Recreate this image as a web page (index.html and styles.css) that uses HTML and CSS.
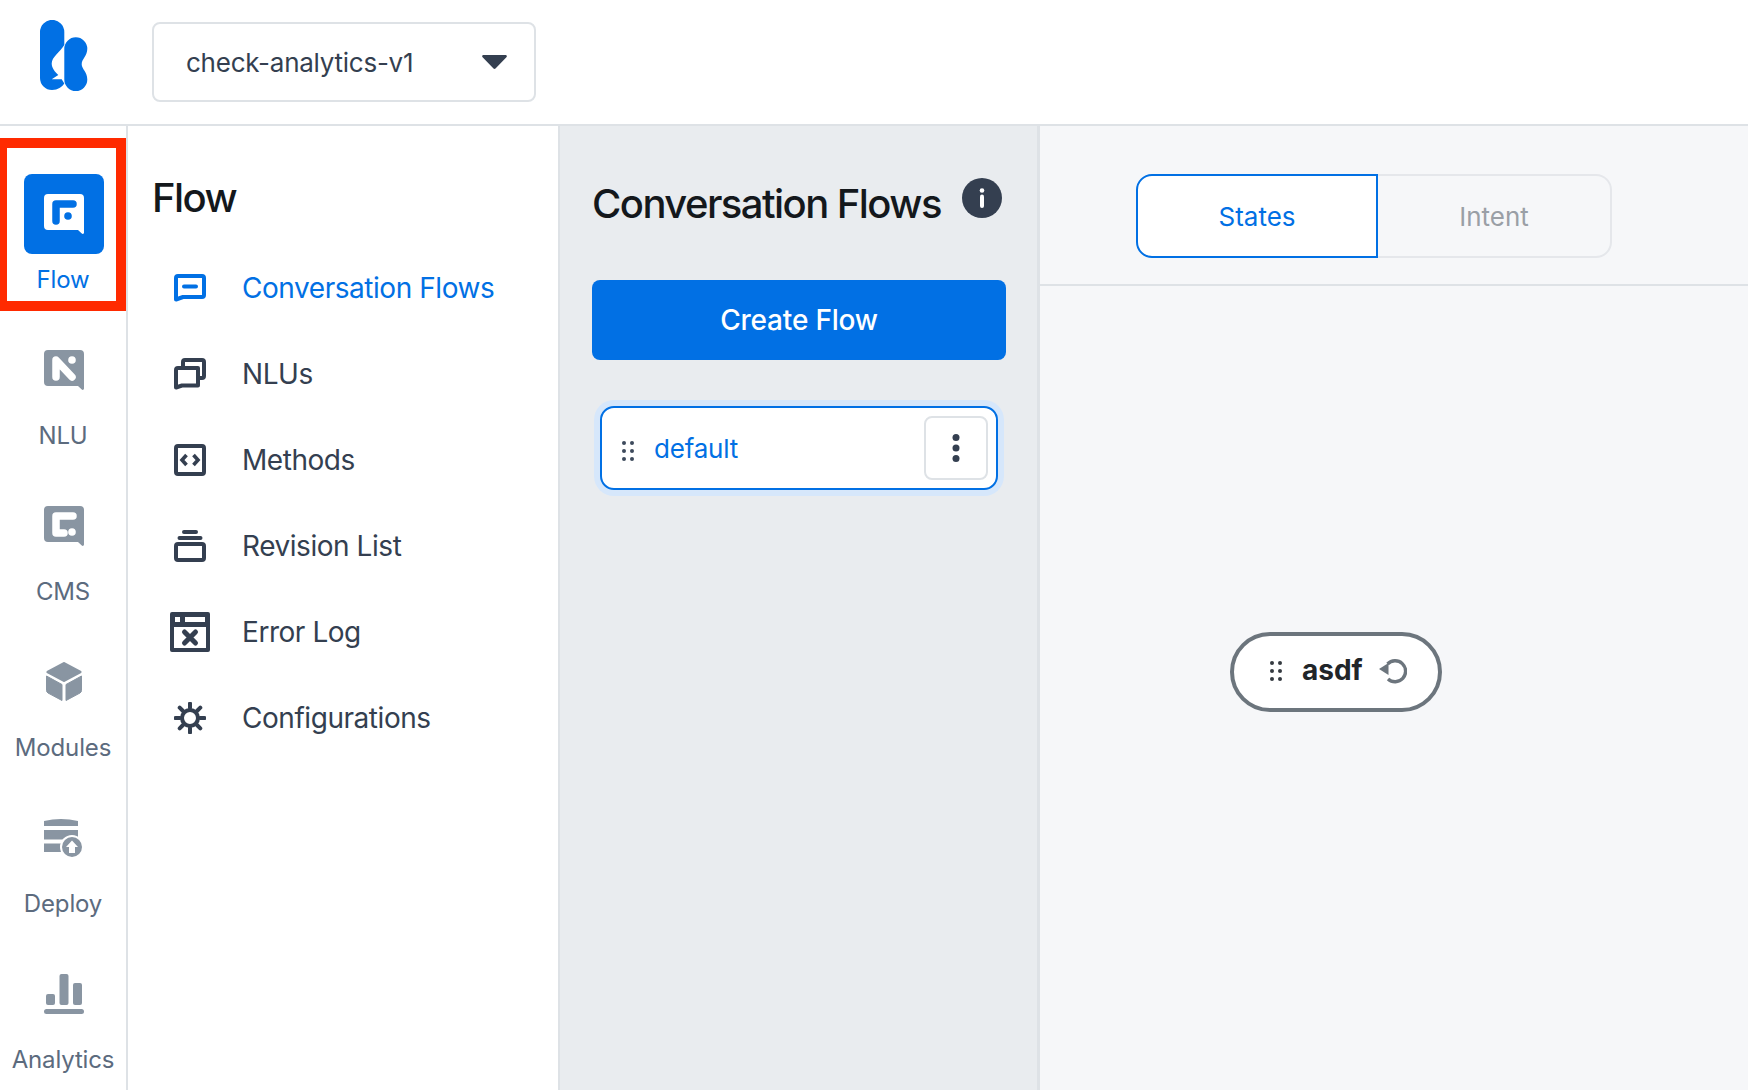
FILE: index.html
```html
<!DOCTYPE html>
<html lang="en">
<head>
  <meta charset="UTF-8" />
  <title>check-analytics-v1 - Flow</title>
  <link rel="stylesheet" href="styles.css">
</head>
<body>

  <header class="topbar">
    <div class="logo">
      <svg width="48" height="71" viewBox="0 0 48 71">
        <path d="M0 12A12 12 0 0 1 24.300 12V25C20 32 11.700 37 11.700 43.500C11.700 48 15 52 18.300 55L11.700 59.300H21.700L24.300 63.500C22 67 18 70 12 70A12 12 0 0 1 0 58Z" fill="#0170e4"/>
        <path d="M24.300 28.800A11.500 11.500 0 0 1 47.300 28.800C47.300 36 41.700 39 41.700 44.300C41.700 49 47.300 52 47.300 59.500A11.500 11.500 0 0 1 24.300 59.500Z" fill="#0170e4"/>
      </svg>
    </div>
    <div class="project-select">
      <span>check-analytics-v1</span>
      <svg width="25" height="14" viewBox="0 0 25 14"><path d="M1.500 0H23.500C24.800 0 25.300 1.400 24.400 2.300L13.500 13.500C12.900 14.100 12.100 14.100 11.500 13.500L0.600 2.300C-0.300 1.400 0.200 0 1.500 0Z" fill="#343f50"/></svg>
    </div>
  </header>

  <div class="main">
    <nav class="rail">
      <a class="rail-item active">
        <span class="tile">
          <svg width="40" height="40" viewBox="0 0 40 40">
            <path class="bubble" d="M4 0H36a4 4 0 0 1 4 4V38.500a1.300 1.300 0 0 1-2.200 1L34 36H4a4 4 0 0 1-4-4V4a4 4 0 0 1 4-4Z" fill="#fff"/>
            <path d="M12 27V10H29" fill="none" stroke="#0170e4" stroke-width="7.500" stroke-linecap="round" stroke-linejoin="round"/>
            <circle cx="24" cy="22" r="3.800" fill="#0170e4"/>
          </svg>
        </span>
        <span class="rail-label">Flow</span>
      </a>
      <a class="rail-item">
        <span class="tile">
          <svg width="42" height="40" viewBox="0 0 40 40">
            <path d="M4 0H36a4 4 0 0 1 4 4V38.500a1.300 1.300 0 0 1-2.200 1L34 36H4a4 4 0 0 1-4-4V4a4 4 0 0 1 4-4Z" fill="#8995a2"/>
            <path d="M12 27V10L28 27" fill="none" stroke="#fff" stroke-width="7.500" stroke-linecap="round" stroke-linejoin="round"/>
            <circle cx="28" cy="10" r="3.800" fill="#fff"/>
          </svg>
        </span>
        <span class="rail-label">NLU</span>
      </a>
      <a class="rail-item">
        <span class="tile">
          <svg width="42" height="40" viewBox="0 0 40 40">
            <path d="M4 0H36a4 4 0 0 1 4 4V38.500a1.300 1.300 0 0 1-2.200 1L34 36H4a4 4 0 0 1-4-4V4a4 4 0 0 1 4-4Z" fill="#8995a2"/>
            <path d="M29 10H12V27H20" fill="none" stroke="#fff" stroke-width="7.500" stroke-linecap="round" stroke-linejoin="round"/>
            <circle cx="28" cy="26" r="3.800" fill="#fff"/>
          </svg>
        </span>
        <span class="rail-label">CMS</span>
      </a>
      <a class="rail-item">
        <span class="tile">
          <svg width="38" height="40" viewBox="0 0 38 40">
            <path d="M19 1.500L35 10L19 18.500L3 10Z" fill="#8995a2" stroke="#8995a2" stroke-width="3" stroke-linejoin="round"/>
            <path d="M1.500 14L17 22.500V38.500L3 31Q1.500 30 1.500 28.500Z" fill="#8995a2" stroke="#8995a2" stroke-width="1" stroke-linejoin="round"/>
            <path d="M36.500 14L21 22.500V38.500L35 31Q36.500 30 36.500 28.500Z" fill="#8995a2" stroke="#8995a2" stroke-width="1" stroke-linejoin="round"/>
          </svg>
        </span>
        <span class="rail-label">Modules</span>
      </a>
      <a class="rail-item">
        <span class="tile">
          <svg width="40" height="40" viewBox="0 0 40 40">
            <path d="M0 3Q17 -1 34 3V8H0Z" fill="#8995a2"/>
            <rect y="12" width="34" height="9.500" fill="#8995a2"/>
            <path d="M0 25.500H34V34H0Z" fill="#8995a2"/>
            <circle cx="28" cy="29" r="12" fill="#fff"/>
            <circle cx="28" cy="29" r="10" fill="#8995a2"/>
            <path d="M28 22.500L34 29H31V35H25V29H22Z" fill="#fff"/>
          </svg>
        </span>
        <span class="rail-label">Deploy</span>
      </a>
      <a class="rail-item">
        <span class="tile">
          <svg width="40" height="40" viewBox="0 0 40 40">
            <rect x="2" y="20" width="9" height="11" rx="2" fill="#8995a2"/>
            <rect x="15.500" y="0" width="9" height="31" rx="2" fill="#8995a2"/>
            <rect x="29" y="9" width="9" height="22" rx="2" fill="#8995a2"/>
            <rect x="0" y="35" width="40" height="5" rx="2.500" fill="#8995a2"/>
          </svg>
        </span>
        <span class="rail-label">Analytics</span>
      </a>
    </nav>

    <aside class="menu">
      <h2>Flow</h2>
      <a class="menu-item current">
        <span class="menu-icon">
          <svg width="32" height="28" viewBox="0 0 32 28">
            <path d="M2 4V25.500L9 23H28A2 2 0 0 0 30 21V4A2 2 0 0 0 28 2H4A2 2 0 0 0 2 4Z" fill="none" stroke="currentColor" stroke-width="4" stroke-linejoin="round"/>
            <path d="M10 12.500H22" stroke="currentColor" stroke-width="4" stroke-linecap="round"/>
          </svg>
        </span>
        Conversation Flows
      </a>
      <a class="menu-item">
        <span class="menu-icon">
          <svg width="32" height="32" viewBox="0 0 32 32">
            <path d="M2 12V29.500L8 27.500H24V10H4A2 2 0 0 0 2 12Z" fill="none" stroke="currentColor" stroke-width="4" stroke-linejoin="round"/>
            <path d="M9 9V4A2 2 0 0 1 11 2H28A2 2 0 0 1 30 4V18A2 2 0 0 1 28 20H24" fill="none" stroke="currentColor" stroke-width="4"/>
          </svg>
        </span>
        NLUs
      </a>
      <a class="menu-item">
        <span class="menu-icon">
          <svg width="32" height="32" viewBox="0 0 32 32">
            <rect x="2" y="2" width="28" height="28" rx="2" fill="none" stroke="currentColor" stroke-width="4"/>
            <path d="M12.500 11L8 16L12.500 21M19.500 11L24 16L19.500 21" fill="none" stroke="currentColor" stroke-width="3.600"/>
          </svg>
        </span>
        Methods
      </a>
      <a class="menu-item">
        <span class="menu-icon">
          <svg width="32" height="32" viewBox="0 0 32 32">
            <path d="M10 2H22M5.500 8H26.500" stroke="currentColor" stroke-width="4" stroke-linecap="round"/>
            <rect x="2" y="14" width="28" height="16" rx="2" fill="none" stroke="currentColor" stroke-width="4"/>
          </svg>
        </span>
        Revision List
      </a>
      <a class="menu-item">
        <span class="menu-icon">
          <svg width="40" height="40" viewBox="0 0 40 40">
            <path fill-rule="evenodd" d="M2 0H38A2 2 0 0 1 40 2V38A2 2 0 0 1 38 40H2A2 2 0 0 1 0 38V2A2 2 0 0 1 2 0ZM5 5V10H10V5ZM15 5V10H35V5ZM4 15V36H36V15Z" fill="currentColor"/>
            <path d="M14.500 20L25.500 31M25.500 20L14.500 31" stroke="currentColor" stroke-width="5" stroke-linecap="round"/>
          </svg>
        </span>
        Error Log
      </a>
      <a class="menu-item">
        <span class="menu-icon">
          <svg width="32" height="32" viewBox="0 0 32 32">
            <circle cx="16" cy="16" r="8" fill="none" stroke="currentColor" stroke-width="4"/>
            <path d="M16 1.500V6M16 26V30.500M1.500 16H6M26 16H30.500M5.700 5.700L9 9M23 23L26.300 26.300M26.300 5.700L23 9M9 23L5.700 26.300" stroke="currentColor" stroke-width="4" stroke-linecap="round"/>
          </svg>
        </span>
        Configurations
      </a>
    </aside>

    <section class="flows">
      <div class="flows-head">
        <h2>Conversation Flows</h2>
        <span class="info-dot">
          <svg width="40" height="40" viewBox="0 0 40 40">
            <circle cx="20" cy="20" r="20" fill="#343f50"/>
            <circle cx="20" cy="12.500" r="2.300" fill="#fff"/>
            <path d="M20 18.500V28" stroke="#fff" stroke-width="4" stroke-linecap="round"/>
          </svg>
        </span>
      </div>
      <button class="create-btn">Create Flow</button>
      <div class="flow-card">
        <svg class="grip" width="12" height="20" viewBox="0 0 12 20">
          <g fill="#3d4a5c"><circle cx="2" cy="2" r="2"/><circle cx="10" cy="2" r="2"/><circle cx="2" cy="10" r="2"/><circle cx="10" cy="10" r="2"/><circle cx="2" cy="18" r="2"/><circle cx="10" cy="18" r="2"/></g>
        </svg>
        <span class="flow-name">default</span>
        <span class="kebab">
          <svg width="8" height="28" viewBox="0 0 8 28">
            <g fill="#343f50"><circle cx="4" cy="3.500" r="3.500"/><circle cx="4" cy="14" r="3.500"/><circle cx="4" cy="24.500" r="3.500"/></g>
          </svg>
        </span>
      </div>
    </section>

    <section class="canvas">
      <div class="tabs-bar">
        <div class="tabs">
          <span class="tab selected">States</span>
          <span class="tab">Intent</span>
        </div>
      </div>
      <div class="node">
        <svg width="12" height="20" viewBox="0 0 12 20">
          <g fill="#343a40"><circle cx="2" cy="2" r="2"/><circle cx="10" cy="2" r="2"/><circle cx="2" cy="10" r="2"/><circle cx="10" cy="10" r="2"/><circle cx="2" cy="18" r="2"/><circle cx="10" cy="18" r="2"/></g>
        </svg>
        <b>asdf</b>
        <svg class="reset" width="28" height="28" viewBox="0 0 28 28">
          <path d="M8.500 8A10.500 10.500 0 1 1 9 23" fill="none" stroke="#6c757d" stroke-width="3.400"/>
          <path d="M0 13L9.500 7V19Z" fill="#6c757d"/>
        </svg>
      </div>
    </section>
  </div>

</body>
</html>
```

FILE: styles.css
```css
* {
  box-sizing: border-box;
}

body {
  margin: 0;
  height: 100vh;
  overflow: hidden;
  font-family: Inter, sans-serif;
  background-color: #fff;
  color: #343f50;
}

h2 {
  margin: 0;
  font-size: 40px;
  line-height: 48px;
  font-weight: 500;
  letter-spacing: -1.55px;
  color: #14181c;
}

/* top bar */
.topbar {
  display: flex;
  align-items: flex-start;
  height: 126px;
  border-bottom: 2px solid #dee2e6;
}

.logo {
  width: 152px;
  padding: 20px 0 0 40px;
}

.logo svg {
  display: block;
}

.project-select {
  display: flex;
  align-items: center;
  justify-content: space-between;
  width: 384px;
  height: 80px;
  margin-top: 22px;
  padding: 0 27px 0 32px;
  border: 2px solid #dee2e6;
  border-radius: 8px;
  font-size: 26px;
  letter-spacing: -0.25px;
}

.main {
  display: flex;
  height: calc(100vh - 126px);
}

/* icon rail */
.rail {
  flex: none;
  width: 128px;
  padding-top: 30px;
  border-right: 2px solid #dee2e6;
  overflow: hidden;
}

.rail-item {
  position: relative;
  display: flex;
  flex-direction: column;
  align-items: center;
  height: 156px;
  padding-top: 18px;
  color: #5c6b7e;
}

.tile {
  display: flex;
  align-items: center;
  justify-content: center;
  width: 80px;
  height: 80px;
  margin: 0 0 10px 2px;
  border-radius: 8px;
}

.rail-label {
  font-size: 24px;
  line-height: 32px;
  letter-spacing: -0.15px;
  white-space: nowrap;
}

.rail-item.active {
  color: #0170e4;
}

.rail-item.active .tile {
  background-color: #0170e4;
}

/* red annotation box */
.rail-item.active::after {
  content: "";
  box-sizing: border-box;
  position: absolute;
  top: -18px;
  left: 0;
  right: 0;
  height: 173px;
  border: 10px solid #ff2a00;
  border-left-width: 7px;
}

/* second column */
.menu {
  flex: none;
  width: 432px;
  padding: 48px 0 0 24px;
  border-right: 2px solid #dee2e6;
}

.menu h2 {
  margin-bottom: 23px;
}

.menu-item {
  display: flex;
  align-items: center;
  gap: 32px;
  height: 86px;
  padding-left: 18px;
  font-size: 28px;
  letter-spacing: -0.45px;
}

.menu-item.current {
  color: #0170e4;
}

.menu-icon {
  display: flex;
  align-items: center;
  justify-content: center;
  width: 40px;
}

/* conversation flows column */
.flows {
  flex: none;
  width: 480px;
  padding: 52px 0 0 32px;
  background-color: #e9ecef;
  border-right: 3px solid #dee2e6;
}

.flows-head {
  display: flex;
  align-items: flex-start;
  gap: 21px;
  height: 50px;
}

.flows-head h2 {
  margin-top: 2px;
  white-space: nowrap;
}

.info-dot svg {
  display: block;
}

.create-btn {
  display: block;
  width: 414px;
  height: 80px;
  margin-top: 52px;
  background-color: #0170e4;
  color: #fff;
  border: none;
  border-radius: 8px;
  font-family: inherit;
  font-size: 28px;
  font-weight: 500;
  letter-spacing: -0.2px;
}

.flow-card {
  display: flex;
  align-items: center;
  width: 398px;
  height: 84px;
  margin: 46px 0 0 8px;
  padding: 0 8px 0 20px;
  background-color: #fff;
  border: 2px solid #0170e4;
  border-radius: 14px;
  box-shadow: 0 0 0 6px #d6e7fb;
}

.grip {
  margin-top: 6px;
}

.flow-name {
  flex: 1;
  margin-left: 20px;
  font-size: 26px;
  letter-spacing: -0.2px;
  color: #0170e4;
}

.kebab {
  display: flex;
  align-items: center;
  justify-content: center;
  width: 64px;
  height: 64px;
  border: 2px solid #dee2e6;
  border-radius: 8px;
}

/* canvas */
.canvas {
  position: relative;
  flex: 1;
  background-color: #f6f7f9;
}

.tabs-bar {
  height: 160px;
  padding: 48px 0 0 96px;
  border-bottom: 2px solid #dee2e6;
}

.tabs {
  display: flex;
  width: 476px;
  height: 84px;
}

.tab {
  display: flex;
  flex: 1;
  align-items: center;
  justify-content: center;
  border: 2px solid #e5e7eb;
  border-left: none;
  border-radius: 0 16px 16px 0;
  font-size: 26px;
  color: #9a9fa6;
}

.tab.selected {
  flex: none;
  width: 242px;
  background-color: #fff;
  border: 2px solid #0170e4;
  border-radius: 16px 0 0 16px;
  color: #0170e4;
}

/* nodes sit at free positions on the canvas */
.node {
  position: absolute;
  left: 190px;
  top: 506px;
  display: flex;
  align-items: center;
  width: 212px;
  height: 80px;
  padding: 0 0 2px 36px;
  background-color: #fff;
  border: 4px solid #6c757d;
  border-radius: 40px;
}

.node b {
  margin: 0 16px 2px 20px;
  font-size: 28px;
  font-weight: 700;
  color: #212529;
}

.reset {
  margin-bottom: 2px;
}
```
